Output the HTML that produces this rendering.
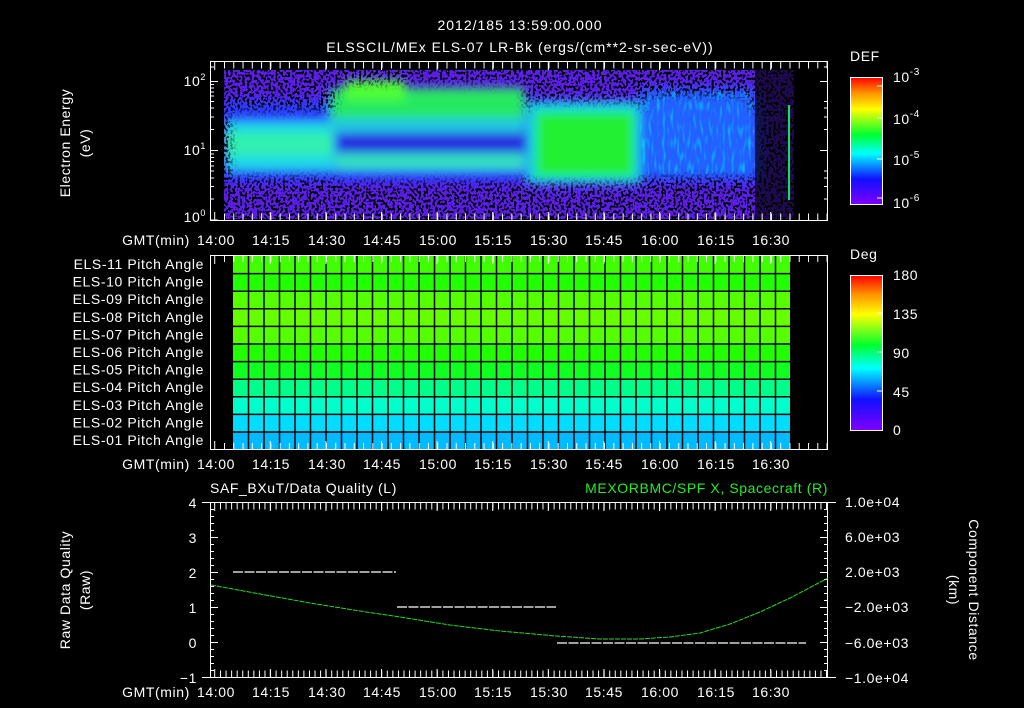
<!DOCTYPE html>
<html><head><meta charset="utf-8"><style>
html,body{margin:0;padding:0;background:#000;width:1024px;height:708px;overflow:hidden}
svg{display:block}
text{font-family:"Liberation Sans",sans-serif;font-size:14px;fill:#fff;letter-spacing:0.6px}
</style></head><body>
<svg width="1024" height="708" viewBox="0 0 1024 708" xmlns="http://www.w3.org/2000/svg">
<defs>
<linearGradient id="cb" x1="0" y1="1" x2="0" y2="0">
<stop offset="0" stop-color="#8000ff"/><stop offset="0.2" stop-color="#1010ff"/>
<stop offset="0.4" stop-color="#00ffff"/><stop offset="0.55" stop-color="#00ff30"/>
<stop offset="0.75" stop-color="#ffff00"/><stop offset="0.88" stop-color="#ff9000"/>
<stop offset="1" stop-color="#ff0000"/></linearGradient>
<filter id="spk" x="0" y="0" width="1" height="1">
<feTurbulence type="fractalNoise" baseFrequency="0.42 0.36" numOctaves="1" seed="4" result="n"/>
<feColorMatrix in="n" type="matrix" values="0 0 0 0 0  0 0 0 0 0  0 0 0 0 0  0 0 0 9 -4.4"/>
<feComponentTransfer><feFuncA type="discrete" tableValues="0 1"/></feComponentTransfer>
</filter>
<filter id="bl" x="-0.3" y="-0.3" width="1.6" height="1.6"><feGaussianBlur stdDeviation="5"/></filter>
<filter id="mot" x="0" y="0" width="1" height="1">
<feTurbulence type="fractalNoise" baseFrequency="0.35 0.08" numOctaves="1" seed="9"/>
<feColorMatrix type="matrix" values="0 0 0 0 0  0 0 0 0 0.9  0 0 0 0 1  0 0 0 2.4 -1.2"/>
</filter>
<clipPath id="sp"><rect x="224" y="70" width="570" height="149"/></clipPath>
<mask id="m1"><rect x="224" y="70" width="570" height="149" fill="#fff"/>
<g filter="url(#bl)"><rect x="230" y="110" width="530" height="68" fill="#000"/><rect x="335" y="82" width="190" height="100" fill="#000"/><rect x="530" y="100" width="110" height="85" fill="#000"/><rect x="645" y="95" width="105" height="80" fill="#000"/></g></mask>
</defs>

<text x="520" y="30" text-anchor="middle" font-size="16" style="letter-spacing:1px">2012/185 13:59:00.000</text>
<text x="520" y="52" text-anchor="middle" font-size="16" style="letter-spacing:1px">ELSSCIL/MEx ELS-07 LR-Bk  (ergs/(cm**2-sr-sec-eV))</text>

<g clip-path="url(#sp)">
<rect x="224" y="70" width="570" height="149" fill="#5a1ee8"/>
<g filter="url(#bl)">
<rect x="224" y="100" width="540" height="82" fill="#2a3cff"/>
<rect x="224" y="122" width="110" height="48" fill="#1ad8e8"/>
<rect x="224" y="132" width="110" height="24" fill="#30f0b0"/>
<rect x="330" y="88" width="195" height="40" fill="#28e860"/>
<rect x="345" y="80" width="60" height="20" fill="#50ff30"/>
<rect x="330" y="118" width="195" height="15" fill="#20c8e0"/>
<rect x="340" y="133" width="185" height="20" fill="#2828e0"/>
<rect x="335" y="153" width="190" height="17" fill="#30e0c0"/>
<rect x="528" y="102" width="112" height="82" fill="#18d8e0"/>
<rect x="536" y="112" width="98" height="64" fill="#20f030"/>
<rect x="640" y="88" width="115" height="90" fill="#2460ff"/>
</g>
<rect x="640" y="92" width="115" height="82" filter="url(#mot)" opacity="0.8"/>
<rect x="224" y="70" width="570" height="149" filter="url(#spk)" mask="url(#m1)"/>
<rect x="755" y="70" width="40" height="149" fill="#000" opacity="0.65"/>
<rect x="788" y="105" width="2" height="95" fill="#10e060"/>
</g>

<rect x="210.5" y="61.5" width="617" height="159" fill="none" stroke="#fff"/>
<path stroke="#fff" d="M210 150.5h8M210 81.5h8M210 220h8M210 199h4M210 186.5h4M210 178h4M210 171h4M210 166h4M210 161.5h4M210 157.5h4M210 154h4M210 129.5h4M210 117h4M210 108h4M210 101.5h4M210 96h4M210 92h4M210 88h4M210 84.5h4M210 67h4
M828 150.5h-8M828 81.5h-8M828 199h-4M828 186.5h-4M828 178h-4M828 171h-4M828 129.5h-4M828 117h-4M828 108h-4M828 101.5h-4M828 67h-4"/>
<g stroke="#fff">
<path d="M214.7 61v9M270.3 61v9M325.9 61v9M381.5 61v9M437.1 61v9M492.7 61v9M548.3 61v9M603.9 61v9M659.5 61v9M715.1 61v9M770.7 61v9M214.7 221v-9M270.3 221v-9M325.9 221v-9M381.5 221v-9M437.1 221v-9M492.7 221v-9M548.3 221v-9M603.9 221v-9M659.5 221v-9M715.1 221v-9M770.7 221v-9"/>
</g>
<g stroke="#fff" stroke-dasharray="1 8.27"><line x1="224" y1="65" x2="828" y2="65" stroke-width="7"/><line x1="224" y1="217" x2="828" y2="217" stroke-width="7"/></g>
<text x="206" y="86" text-anchor="end" font-size="13">10<tspan dy="-6" font-size="9">2</tspan></text>
<text x="206" y="155" text-anchor="end" font-size="13">10<tspan dy="-6" font-size="9">1</tspan></text>
<text x="206" y="222" text-anchor="end" font-size="13">10<tspan dy="-6" font-size="9">0</tspan></text>
<text transform="translate(70,143) rotate(-90)" text-anchor="middle" font-size="15">Electron Energy</text>
<text transform="translate(90,143) rotate(-90)" text-anchor="middle" font-size="15">(eV)</text>
<text x="850" y="61" font-size="16">DEF</text>
<rect x="850.5" y="77.5" width="32" height="127" fill="url(#cb)" stroke="#fff"/>
<path stroke="#fff" d="M877 86h5M877 118h5M877 159h5M877 198h5"/>
<text x="893" y="82" font-size="16">10<tspan dy="-7" font-size="10">-3</tspan></text>
<text x="893" y="124" font-size="16">10<tspan dy="-7" font-size="10">-4</tspan></text>
<text x="893" y="165" font-size="16">10<tspan dy="-7" font-size="10">-5</tspan></text>
<text x="893" y="208" font-size="16">10<tspan dy="-7" font-size="10">-6</tspan></text>
<g text-anchor="middle">
<text x="156" y="245" font-size="13">GMT(min)</text>
<text x="216" y="245">14:00</text><text x="271" y="245">14:15</text><text x="327" y="245">14:30</text><text x="382" y="245">14:45</text><text x="438" y="245">15:00</text><text x="493" y="245">15:15</text><text x="549" y="245">15:30</text><text x="604" y="245">15:45</text><text x="660" y="245">16:00</text><text x="716" y="245">16:15</text><text x="771" y="245">16:30</text>
</g>

<rect x="233" y="256" width="557" height="17.6" fill="#40ff00"/>
<rect x="233" y="273.6" width="557" height="17.6" fill="#22ff00"/>
<rect x="233" y="291.2" width="557" height="17.6" fill="#55ff00"/>
<rect x="233" y="308.8" width="557" height="17.6" fill="#66ff00"/>
<rect x="233" y="326.4" width="557" height="17.6" fill="#55ff00"/>
<rect x="233" y="344" width="557" height="17.6" fill="#22ff00"/>
<rect x="233" y="361.6" width="557" height="17.6" fill="#10ff20"/>
<rect x="233" y="379.2" width="557" height="17.6" fill="#00ff88"/>
<rect x="233" y="396.8" width="557" height="17.6" fill="#00ffcc"/>
<rect x="233" y="414.4" width="557" height="17.6" fill="#00ddff"/>
<rect x="233" y="432" width="557" height="18" fill="#00bbff"/>
<g stroke="#000" stroke-width="1.5">
<path d="M233 273.6h557M233 291.2h557M233 308.8h557M233 326.4h557M233 344h557M233 361.6h557M233 379.2h557M233 396.8h557M233 414.4h557M233 432h557"/>
<path d="M248.5 256v194M264 256v194M279.5 256v194M295 256v194M310.5 256v194M326 256v194M341.5 256v194M357 256v194M372.5 256v194M388 256v194M403.5 256v194M419 256v194M434.5 256v194M450 256v194M465.5 256v194M481 256v194M496.5 256v194M512 256v194M527.5 256v194M543 256v194M558.5 256v194M574 256v194M589.5 256v194M605 256v194M620.5 256v194M636 256v194M651.5 256v194M667 256v194M682.5 256v194M698 256v194M713.5 256v194M729 256v194M744.5 256v194M760 256v194M775.5 256v194"/>
</g>
<rect x="210.5" y="255.5" width="617" height="194" fill="none" stroke="#fff"/>
<g stroke="#fff">
<path d="M214.7 255v9M270.3 255v9M325.9 255v9M381.5 255v9M437.1 255v9M492.7 255v9M548.3 255v9M603.9 255v9M659.5 255v9M715.1 255v9M770.7 255v9M214.7 450v-9M270.3 450v-9M325.9 450v-9M381.5 450v-9M437.1 450v-9M492.7 450v-9M548.3 450v-9M603.9 450v-9M659.5 450v-9M715.1 450v-9M770.7 450v-9"/>
</g>
<g stroke="#fff" stroke-dasharray="1 8.27"><line x1="224" y1="259" x2="828" y2="259" stroke-width="6"/><line x1="224" y1="446" x2="828" y2="446" stroke-width="6"/></g>
<g text-anchor="end" font-size="13.5">
<text x="204" y="269">ELS-11 Pitch Angle</text><text x="204" y="286.6">ELS-10 Pitch Angle</text><text x="204" y="304.2">ELS-09 Pitch Angle</text><text x="204" y="321.8">ELS-08 Pitch Angle</text><text x="204" y="339.4">ELS-07 Pitch Angle</text><text x="204" y="357">ELS-06 Pitch Angle</text><text x="204" y="374.6">ELS-05 Pitch Angle</text><text x="204" y="392.2">ELS-04 Pitch Angle</text><text x="204" y="409.8">ELS-03 Pitch Angle</text><text x="204" y="427.4">ELS-02 Pitch Angle</text><text x="204" y="445">ELS-01 Pitch Angle</text>
</g>
<text x="850" y="259" font-size="16">Deg</text>
<rect x="850.5" y="275.5" width="32" height="155" fill="url(#cb)" stroke="#fff"/>
<path stroke="#fff" d="M877 313h5M877 352h5M877 391h5"/>
<g font-size="16"><text x="893" y="280">180</text><text x="893" y="319">135</text><text x="893" y="358">90</text><text x="893" y="397">45</text><text x="893" y="435">0</text></g>
<g text-anchor="middle">
<text x="156" y="469" font-size="13">GMT(min)</text>
<text x="216" y="469">14:00</text><text x="271" y="469">14:15</text><text x="327" y="469">14:30</text><text x="382" y="469">14:45</text><text x="438" y="469">15:00</text><text x="493" y="469">15:15</text><text x="549" y="469">15:30</text><text x="604" y="469">15:45</text><text x="660" y="469">16:00</text><text x="716" y="469">16:15</text><text x="771" y="469">16:30</text>
</g>

<text x="210" y="493" font-size="16">SAF_BXuT/Data Quality (L)</text>
<text x="828" y="493" font-size="16" text-anchor="end" style="fill:#22ee22">MEXORBMC/SPF X, Spacecraft (R)</text>
<rect x="210.5" y="502.5" width="617" height="175" fill="none" stroke="#fff"/>
<g stroke="#fff">
<path d="M214.7 502v9M270.3 502v9M325.9 502v9M381.5 502v9M437.1 502v9M492.7 502v9M548.3 502v9M603.9 502v9M659.5 502v9M715.1 502v9M770.7 502v9M214.7 678v-9M270.3 678v-9M325.9 678v-9M381.5 678v-9M437.1 678v-9M492.7 678v-9M548.3 678v-9M603.9 678v-9M659.5 678v-9M715.1 678v-9M770.7 678v-9"/>
<path d="M202 502.5h8M210 537.5h8M210 572.5h8M210 607.5h8M210 642.5h8M202 677.5h8M828 537.5h-8M828 572.5h-8M828 607.5h-8M828 642.5h-8M828 502.5h8M828 677.5h8"/>
</g>
<g stroke="#fff" stroke-dasharray="1 4.56"><line x1="220" y1="506" x2="828" y2="506" stroke-width="7"/><line x1="220" y1="674" x2="828" y2="674" stroke-width="7"/></g>
<path stroke="#fff" d="M210 509.5h4M210 516.5h4M210 523.5h4M210 530.5h4M210 544.5h4M210 551.5h4M210 558.5h4M210 565.5h4M210 579.5h4M210 586.5h4M210 593.5h4M210 600.5h4M210 614.5h4M210 621.5h4M210 628.5h4M210 635.5h4M210 649.5h4M210 656.5h4M210 663.5h4M210 670.5h4
M828 509.5h-4M828 516.5h-4M828 523.5h-4M828 530.5h-4M828 544.5h-4M828 551.5h-4M828 558.5h-4M828 565.5h-4M828 579.5h-4M828 586.5h-4M828 593.5h-4M828 600.5h-4M828 614.5h-4M828 621.5h-4M828 628.5h-4M828 635.5h-4M828 649.5h-4M828 656.5h-4M828 663.5h-4M828 670.5h-4"/>
<g text-anchor="end" font-size="15"><text x="197" y="508">4</text><text x="197" y="543">3</text><text x="197" y="578">2</text><text x="197" y="613">1</text><text x="197" y="648">0</text><text x="197" y="683">−1</text></g>
<g font-size="13"><text x="845" y="507">1.0e+04</text><text x="845" y="542">6.0e+03</text><text x="845" y="577">2.0e+03</text><text x="845" y="612">−2.0e+03</text><text x="845" y="648">−6.0e+03</text><text x="845" y="683">−1.0e+04</text></g>
<text transform="translate(70,590) rotate(-90)" text-anchor="middle" font-size="15">Raw Data Quality</text>
<text transform="translate(90,590) rotate(-90)" text-anchor="middle" font-size="15">(Raw)</text>
<text transform="translate(969,590) rotate(90)" text-anchor="middle" font-size="15">Component Distance</text>
<text transform="translate(949,590) rotate(90)" text-anchor="middle" font-size="15">(km)</text>
<path stroke="#fff" stroke-width="1.2" stroke-dasharray="10 1.5" d="M233 572h163M397 607h159M557 643h249"/>
<polyline fill="none" stroke="#22dd22" stroke-dasharray="5 1" points="211,585 260,594 310,603 360,611 400,617 450,625 500,631 556,636 600,639 640,639 670,637 700,633 730,624 760,612 790,598 828,578"/>
<g text-anchor="middle">
<text x="156" y="697" font-size="13">GMT(min)</text>
<text x="216" y="697">14:00</text><text x="271" y="697">14:15</text><text x="327" y="697">14:30</text><text x="382" y="697">14:45</text><text x="438" y="697">15:00</text><text x="493" y="697">15:15</text><text x="549" y="697">15:30</text><text x="604" y="697">15:45</text><text x="660" y="697">16:00</text><text x="716" y="697">16:15</text><text x="771" y="697">16:30</text>
</g>
</svg>
</body></html>
